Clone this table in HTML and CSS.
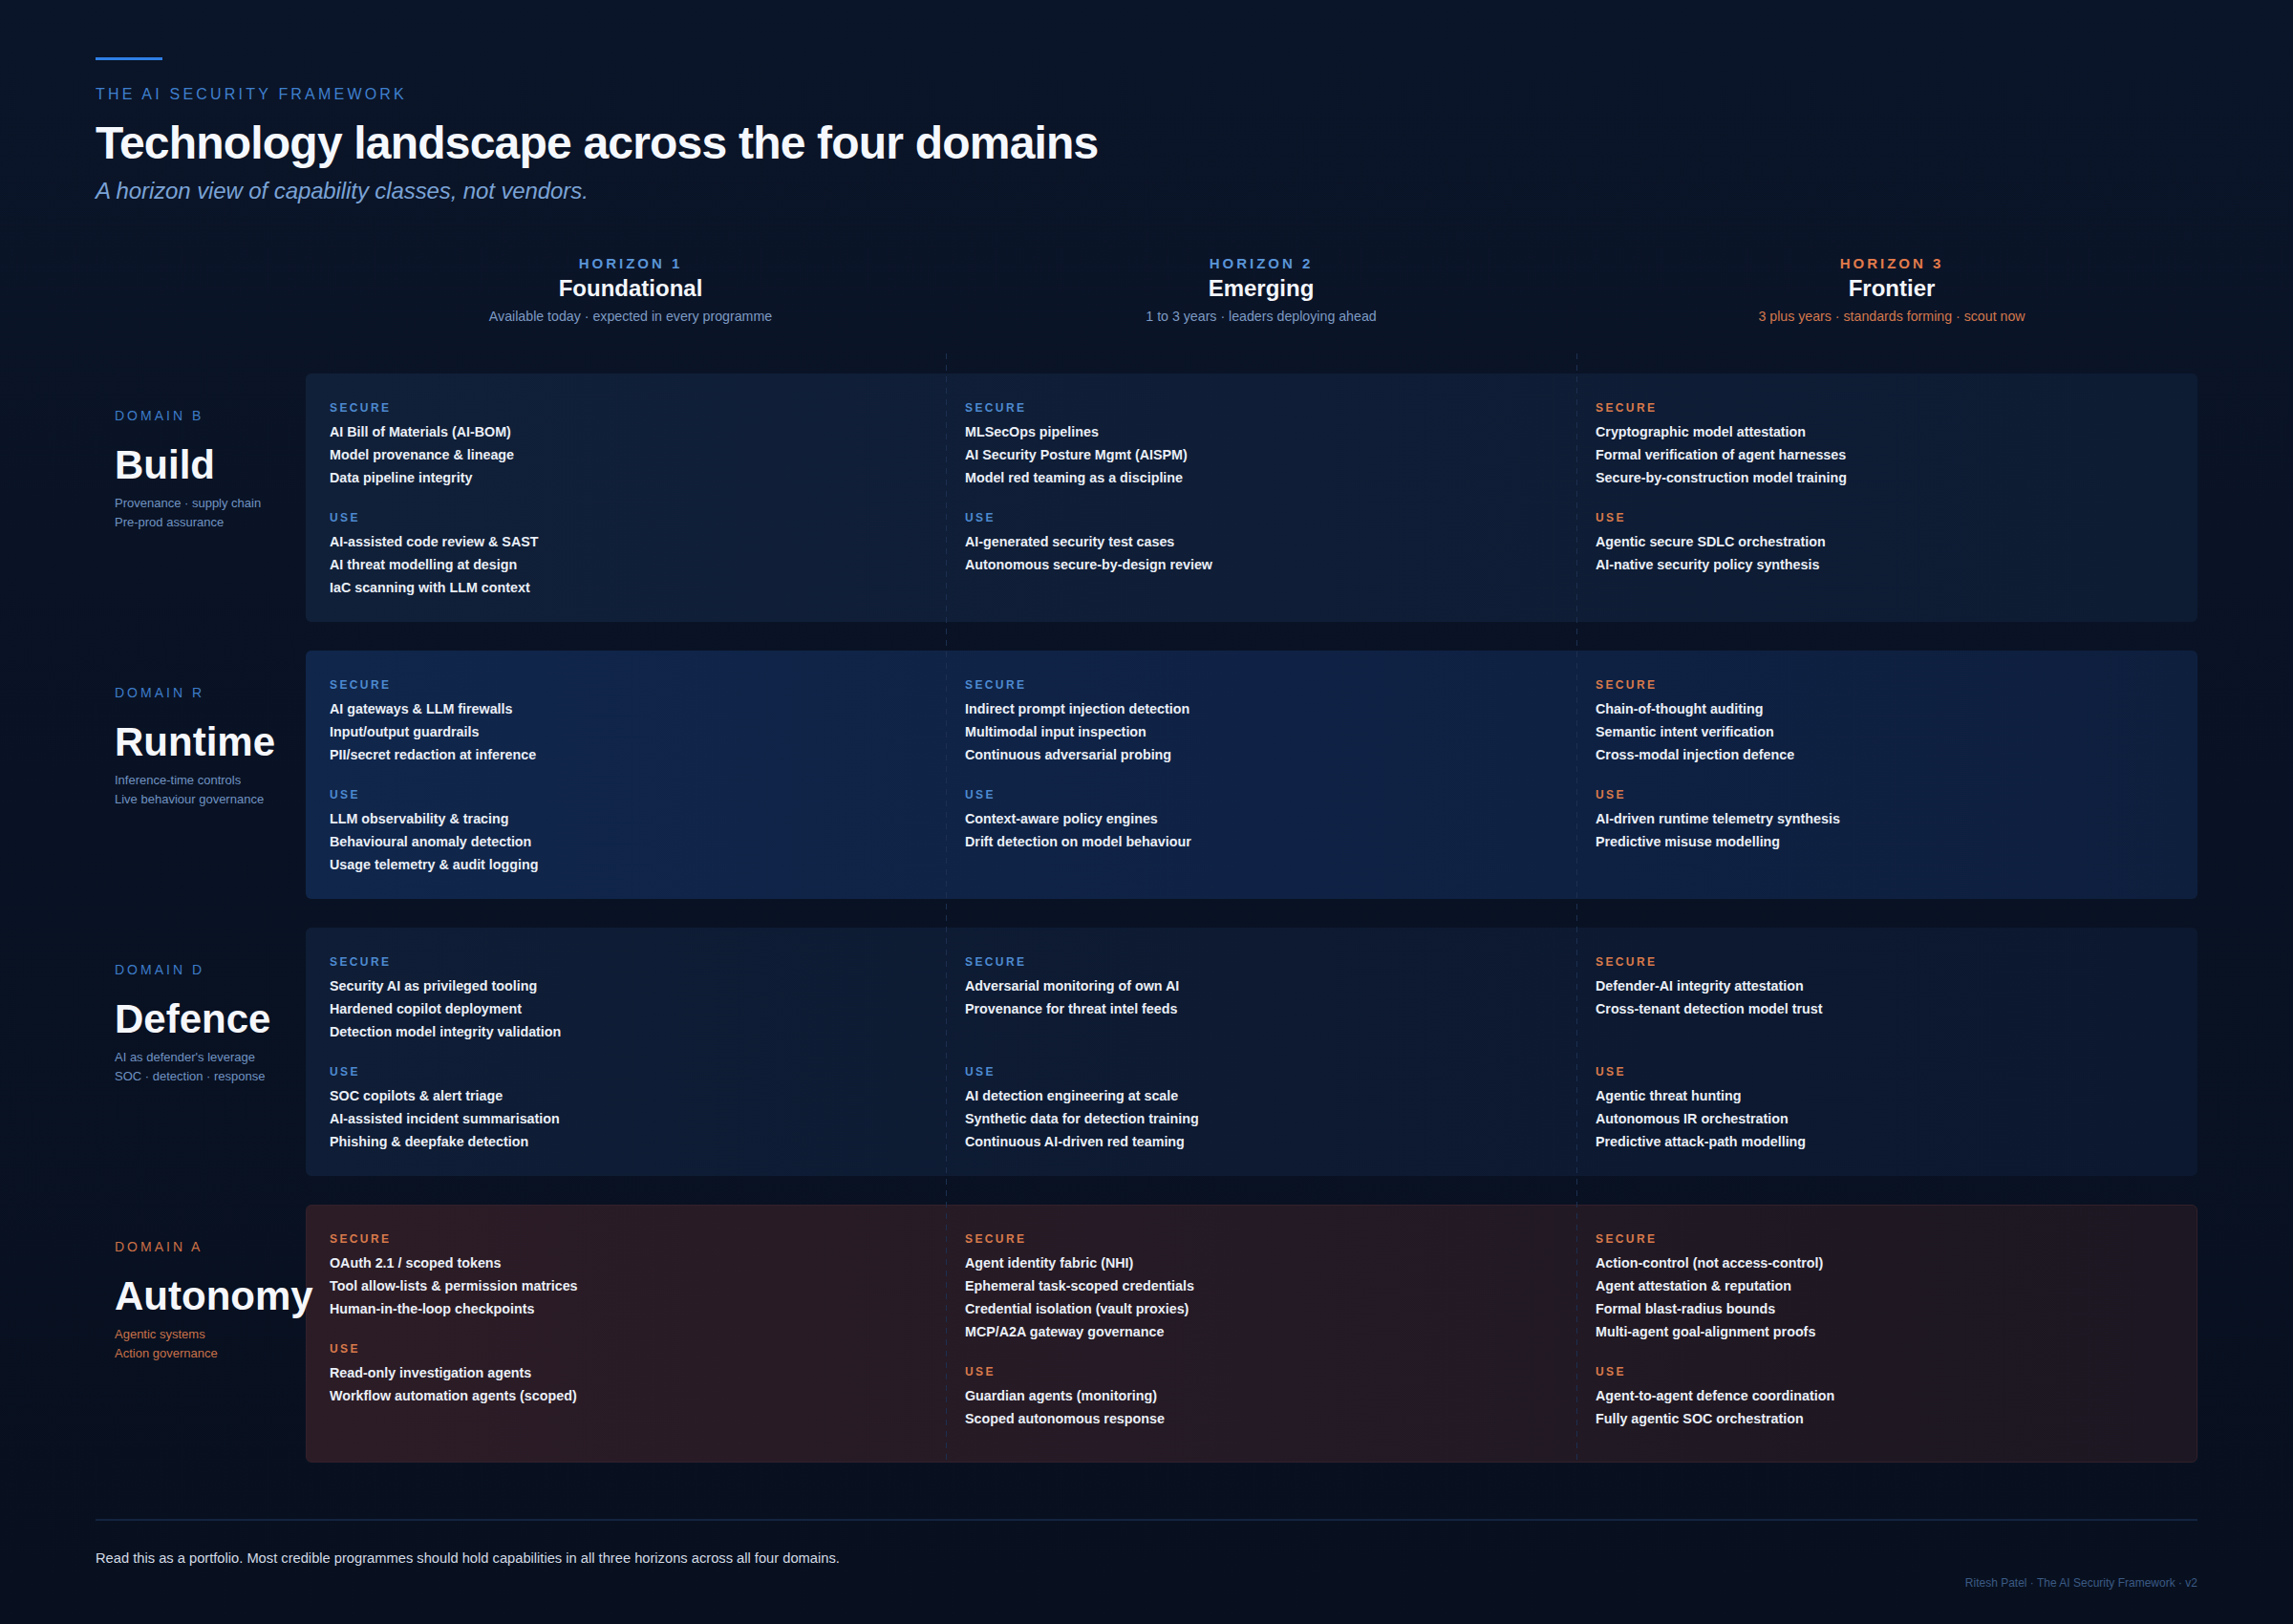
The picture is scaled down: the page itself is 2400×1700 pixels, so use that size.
FILE: index.html
```html
<!DOCTYPE html>
<html lang="en">
<head>
<meta charset="utf-8">
<title>Technology landscape across the four domains</title>
<link rel="stylesheet" href="styles.css">
</head>
<body>
<main class="page">
  <header class="intro">
    <div class="accent"></div>
    <p class="eyebrow">THE AI SECURITY FRAMEWORK</p>
    <h1 class="title">Technology landscape across the four domains</h1>
    <p class="subtitle">A horizon view of capability classes, not vendors.</p>
  </header>

  <section class="matrix">
    <div class="guide guide-a"></div>
    <div class="guide guide-b"></div>

    <div class="horizons">
      <div class="horizon-spacer"></div>
      <div class="horizon">
        <p class="horizon-num">HORIZON 1</p>
        <p class="horizon-name">Foundational</p>
        <p class="horizon-sub">Available today · expected in every programme</p>
      </div>
      <div class="horizon">
        <p class="horizon-num">HORIZON 2</p>
        <p class="horizon-name">Emerging</p>
        <p class="horizon-sub">1 to 3 years · leaders deploying ahead</p>
      </div>
      <div class="horizon horizon-frontier">
        <p class="horizon-num">HORIZON 3</p>
        <p class="horizon-name">Frontier</p>
        <p class="horizon-sub">3 plus years · standards forming · scout now</p>
      </div>
    </div>

    <div class="row">
      <div class="domain">
        <p class="domain-tag">DOMAIN B</p>
        <h2 class="domain-name">Build</h2>
        <p class="domain-sub">Provenance · supply chain<br>Pre-prod assurance</p>
      </div>
      <div class="card card-build">
        <div class="cell">
          <div class="group"><p class="label">SECURE</p><ul class="items"><li>AI Bill of Materials (AI-BOM)</li><li>Model provenance &amp; lineage</li><li>Data pipeline integrity</li></ul></div>
          <div class="group"><p class="label">USE</p><ul class="items"><li>AI-assisted code review &amp; SAST</li><li>AI threat modelling at design</li><li>IaC scanning with LLM context</li></ul></div>
        </div>
        <div class="cell">
          <div class="group"><p class="label">SECURE</p><ul class="items"><li>MLSecOps pipelines</li><li>AI Security Posture Mgmt (AISPM)</li><li>Model red teaming as a discipline</li></ul></div>
          <div class="group"><p class="label">USE</p><ul class="items"><li>AI-generated security test cases</li><li>Autonomous secure-by-design review</li></ul></div>
        </div>
        <div class="cell cell-frontier">
          <div class="group"><p class="label">SECURE</p><ul class="items"><li>Cryptographic model attestation</li><li>Formal verification of agent harnesses</li><li>Secure-by-construction model training</li></ul></div>
          <div class="group"><p class="label">USE</p><ul class="items"><li>Agentic secure SDLC orchestration</li><li>AI-native security policy synthesis</li></ul></div>
        </div>
      </div>
    </div>

    <div class="row">
      <div class="domain">
        <p class="domain-tag">DOMAIN R</p>
        <h2 class="domain-name">Runtime</h2>
        <p class="domain-sub">Inference-time controls<br>Live behaviour governance</p>
      </div>
      <div class="card card-runtime">
        <div class="cell">
          <div class="group"><p class="label">SECURE</p><ul class="items"><li>AI gateways &amp; LLM firewalls</li><li>Input/output guardrails</li><li>PII/secret redaction at inference</li></ul></div>
          <div class="group"><p class="label">USE</p><ul class="items"><li>LLM observability &amp; tracing</li><li>Behavioural anomaly detection</li><li>Usage telemetry &amp; audit logging</li></ul></div>
        </div>
        <div class="cell">
          <div class="group"><p class="label">SECURE</p><ul class="items"><li>Indirect prompt injection detection</li><li>Multimodal input inspection</li><li>Continuous adversarial probing</li></ul></div>
          <div class="group"><p class="label">USE</p><ul class="items"><li>Context-aware policy engines</li><li>Drift detection on model behaviour</li></ul></div>
        </div>
        <div class="cell cell-frontier">
          <div class="group"><p class="label">SECURE</p><ul class="items"><li>Chain-of-thought auditing</li><li>Semantic intent verification</li><li>Cross-modal injection defence</li></ul></div>
          <div class="group"><p class="label">USE</p><ul class="items"><li>AI-driven runtime telemetry synthesis</li><li>Predictive misuse modelling</li></ul></div>
        </div>
      </div>
    </div>

    <div class="row">
      <div class="domain">
        <p class="domain-tag">DOMAIN D</p>
        <h2 class="domain-name">Defence</h2>
        <p class="domain-sub">AI as defender's leverage<br>SOC · detection · response</p>
      </div>
      <div class="card card-defence">
        <div class="cell">
          <div class="group"><p class="label">SECURE</p><ul class="items"><li>Security AI as privileged tooling</li><li>Hardened copilot deployment</li><li>Detection model integrity validation</li></ul></div>
          <div class="group"><p class="label">USE</p><ul class="items"><li>SOC copilots &amp; alert triage</li><li>AI-assisted incident summarisation</li><li>Phishing &amp; deepfake detection</li></ul></div>
        </div>
        <div class="cell">
          <div class="group"><p class="label">SECURE</p><ul class="items"><li>Adversarial monitoring of own AI</li><li>Provenance for threat intel feeds</li></ul></div>
          <div class="group"><p class="label">USE</p><ul class="items"><li>AI detection engineering at scale</li><li>Synthetic data for detection training</li><li>Continuous AI-driven red teaming</li></ul></div>
        </div>
        <div class="cell cell-frontier">
          <div class="group"><p class="label">SECURE</p><ul class="items"><li>Defender-AI integrity attestation</li><li>Cross-tenant detection model trust</li></ul></div>
          <div class="group"><p class="label">USE</p><ul class="items"><li>Agentic threat hunting</li><li>Autonomous IR orchestration</li><li>Predictive attack-path modelling</li></ul></div>
        </div>
      </div>
    </div>

    <div class="row row-autonomy">
      <div class="domain">
        <p class="domain-tag">DOMAIN A</p>
        <h2 class="domain-name">Autonomy</h2>
        <p class="domain-sub">Agentic systems<br>Action governance</p>
      </div>
      <div class="card card-autonomy">
        <div class="cell">
          <div class="group"><p class="label">SECURE</p><ul class="items"><li>OAuth 2.1 / scoped tokens</li><li>Tool allow-lists &amp; permission matrices</li><li>Human-in-the-loop checkpoints</li></ul></div>
          <div class="group"><p class="label">USE</p><ul class="items"><li>Read-only investigation agents</li><li>Workflow automation agents (scoped)</li></ul></div>
        </div>
        <div class="cell">
          <div class="group"><p class="label">SECURE</p><ul class="items"><li>Agent identity fabric (NHI)</li><li>Ephemeral task-scoped credentials</li><li>Credential isolation (vault proxies)</li><li>MCP/A2A gateway governance</li></ul></div>
          <div class="group"><p class="label">USE</p><ul class="items"><li>Guardian agents (monitoring)</li><li>Scoped autonomous response</li></ul></div>
        </div>
        <div class="cell">
          <div class="group"><p class="label">SECURE</p><ul class="items"><li>Action-control (not access-control)</li><li>Agent attestation &amp; reputation</li><li>Formal blast-radius bounds</li><li>Multi-agent goal-alignment proofs</li></ul></div>
          <div class="group"><p class="label">USE</p><ul class="items"><li>Agent-to-agent defence coordination</li><li>Fully agentic SOC orchestration</li></ul></div>
        </div>
      </div>
    </div>
  </section>

  <footer class="footer">
    <p class="footer-note">Read this as a portfolio. Most credible programmes should hold capabilities in all three horizons across all four domains.</p>
    <p class="credit">Ritesh Patel · The AI Security Framework · v2</p>
  </footer>
</main>
</body>
</html>
```

FILE: styles.css
```css
* { box-sizing: border-box; }

html, body {
  margin: 0;
  padding: 0;
}

body {
  width: 2400px;
  height: 1700px;
  background: linear-gradient(180deg, #0b1529 0%, #091224 50%, #08101f 100%);
  font-family: "Liberation Sans", Arial, sans-serif;
  color: #eef2f8;
  overflow: hidden;
}

p, h1, h2, ul { margin: 0; padding: 0; }

.page {
  padding: 60px 100px 0;
}

/* ---------- intro ---------- */
.accent {
  width: 70px;
  height: 3px;
  background: #2f7fe6;
  margin-bottom: 26px;
}

.eyebrow {
  font-size: 16px;
  line-height: 20px;
  letter-spacing: 3.2px;
  color: #3f80cf;
}

.title {
  margin-top: 13px;
  font-size: 48px;
  line-height: 56px;
  font-weight: 700;
  letter-spacing: -0.8px;
  color: #f5f8fd;
}

.subtitle {
  margin-top: 7px;
  font-size: 24px;
  line-height: 30px;
  font-style: italic;
  letter-spacing: -0.1px;
  color: #7aa3d6;
}

/* ---------- matrix ---------- */
.matrix {
  position: relative;
  margin-top: 51px;
}

.guide {
  position: absolute;
  top: 104px;
  bottom: 0;
  width: 1px;
  background: repeating-linear-gradient(180deg, #1c2f50 0 6px, transparent 6px 12px);
  z-index: 2;
  pointer-events: none;
}
.guide-a { left: 890px; }
.guide-b { left: 1550px; }

.horizons {
  display: grid;
  grid-template-columns: 220px repeat(3, 1fr);
  margin-bottom: 51px;
}

.horizon {
  padding-left: 20px;
  text-align: center;
}

.horizon-num {
  font-size: 15px;
  line-height: 20px;
  font-weight: 700;
  letter-spacing: 3px;
  color: #5a95d8;
}

.horizon-name {
  margin-top: 2px;
  font-size: 24px;
  line-height: 28px;
  font-weight: 700;
  color: #f3f6fb;
}

.horizon-sub {
  margin-top: 6px;
  font-size: 14.2px;
  line-height: 18px;
  color: #7d9ac3;
}

.horizon-frontier .horizon-num { color: #e27b4b; }
.horizon-frontier .horizon-sub { color: #d3784d; }

/* ---------- rows ---------- */
.row {
  display: grid;
  grid-template-columns: 220px 1fr;
  margin-bottom: 30px;
}
.row:last-of-type { margin-bottom: 0; }

.domain {
  padding: 35px 0 0 20px;
  white-space: nowrap;
  position: relative;
  z-index: 3;
}

.domain-tag {
  font-size: 14px;
  line-height: 18px;
  letter-spacing: 3px;
  color: #3d7cc8;
}

.domain-name {
  margin-top: 19px;
  font-size: 42px;
  line-height: 48px;
  font-weight: 700;
  color: #f5f7fb;
}

.domain-sub {
  margin-top: 6px;
  font-size: 13px;
  line-height: 20px;
  color: #7093c2;
}

.row-autonomy .domain-tag { color: #cb7046; }
.row-autonomy .domain-sub { color: #c8724a; }

.card {
  display: grid;
  grid-template-columns: 670px 660px 1fr;
  padding: 28px 0 24px 0;
  border-radius: 6px;
  min-height: 260px;
}

.cell { padding-left: 20px; }
.cell:first-child { padding-left: 25px; }

.card-build   { background: linear-gradient(90deg, #112039 0%, #0f1d36 50%, #0d1b33 100%); }
.card-runtime { background: linear-gradient(90deg, #10264b 0%, #0f2245 50%, #0e1f3e 100%); }
.card-defence { background: linear-gradient(90deg, #0f1d36 0%, #0d1a32 50%, #0c182f 100%); }
.card-autonomy {
  background: linear-gradient(90deg, #2c1c26 0%, #241a25 50%, #1c1722 100%);
  border: 1px solid #33202b;
  padding: 27px 0 33px 0;
  grid-template-columns: 669px 660px 1fr;
}
.card-autonomy .cell:first-child { padding-left: 24px; }

.group:first-child { min-height: 93px; }
.group + .group { margin-top: 22px; }

.label {
  font-size: 12px;
  line-height: 16px;
  font-weight: 700;
  letter-spacing: 2.4px;
  color: #4d8ad0;
  margin-bottom: 5px;
}

.cell-frontier .label,
.card-autonomy .label { color: #d97a4b; }

.items {
  list-style: none;
}

.items li {
  font-size: 14.3px;
  line-height: 24px;
  font-weight: 700;
  color: #eaeff7;
  white-space: nowrap;
}

/* ---------- footer ---------- */
.footer {
  margin-top: 59px;
  border-top: 2px solid #13243f;
  padding-top: 29px;
}

.footer-note {
  font-size: 14.7px;
  line-height: 20px;
  color: #d3dae5;
}

.credit {
  margin-top: 8px;
  text-align: right;
  font-size: 12px;
  line-height: 16px;
  color: #3b5a84;
}
```
